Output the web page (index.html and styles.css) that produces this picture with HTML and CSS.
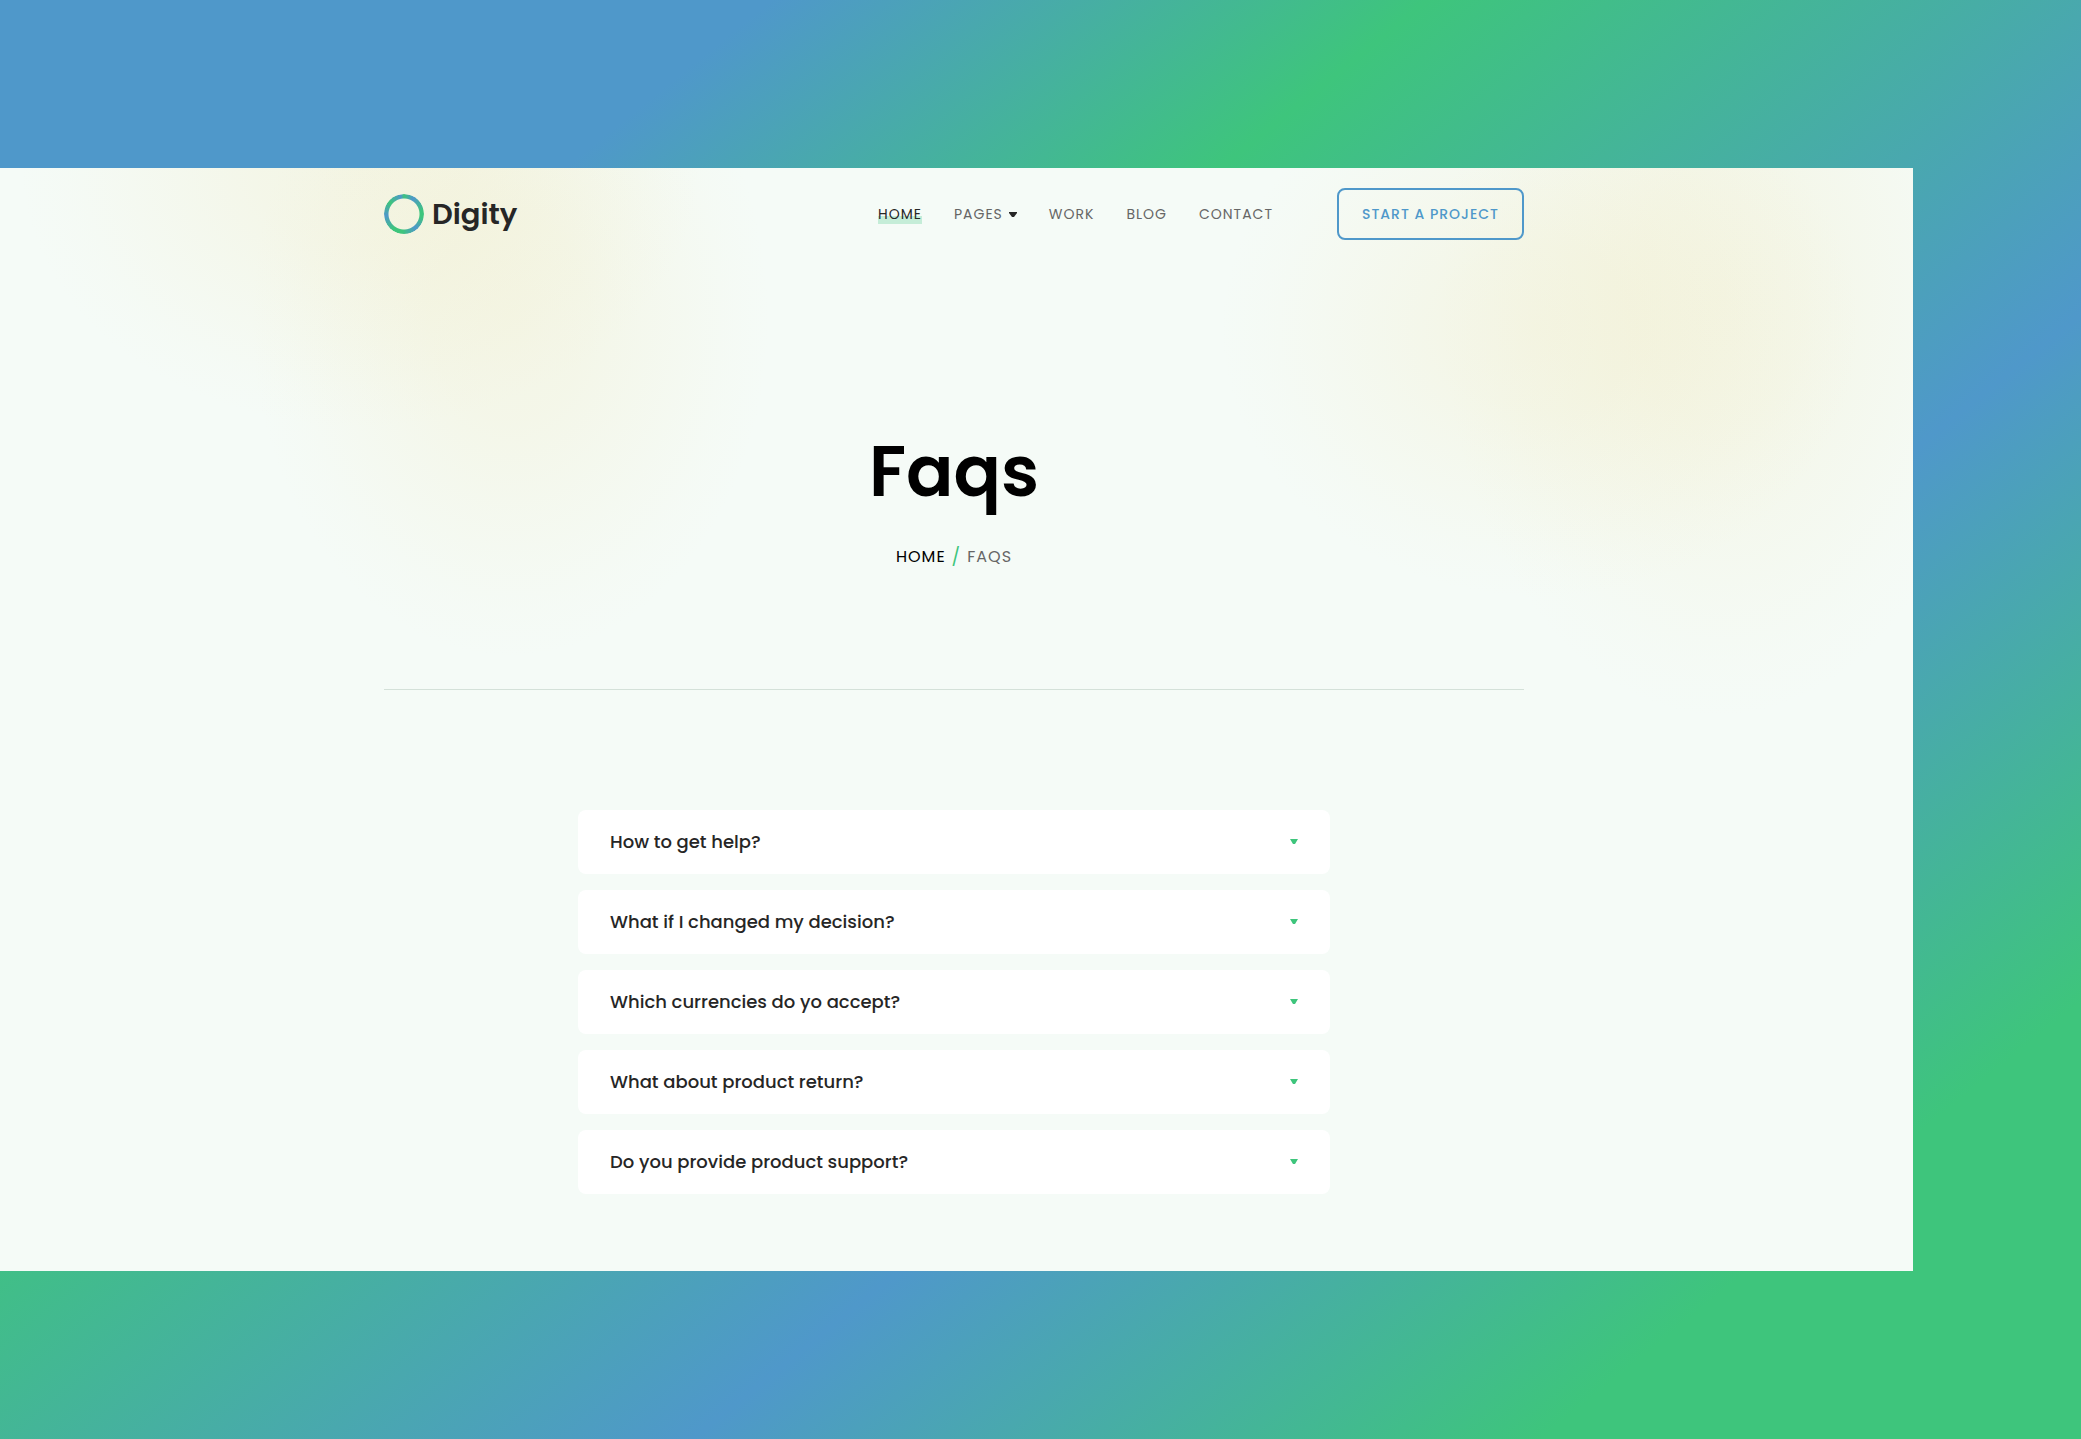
FILE: index.html
```
<!DOCTYPE html>
<html lang="en">
<head>
<meta charset="utf-8">
<title>Faqs – Digity</title>
<link rel="stylesheet" href="styles.css">
</head>
<body>
<div class="page">
  <header class="header container">
    <a class="brand" href="#">
      <span class="brand-mark"></span>
      <span>Digity</span>
    </a>
    <nav class="nav" aria-label="Main">
      <a class="nav-link active" href="#">HOME</a>
      <a class="nav-link" href="#">PAGES <svg class="caret" viewBox="0 0 8 5" aria-hidden="true"><path d="M0 0h8v1L5 5H3L0 1z"/></svg></a>
      <a class="nav-link" href="#">WORK</a>
      <a class="nav-link" href="#">BLOG</a>
      <a class="nav-link" href="#">CONTACT</a>
    </nav>
    <a class="cta" href="#">START A PROJECT</a>
  </header>
  <main>
    <section class="hero container">
      <h1>Faqs</h1>
      <nav class="crumbs" aria-label="Breadcrumb">
        <a href="#">HOME</a><span class="slash">/</span><span>FAQS</span>
      </nav>
    </section>
    <section class="faq">
      <button class="faq-item" type="button"><span>How to get help?</span><svg class="caret" viewBox="0 0 8 5" aria-hidden="true"><path d="M0 0h8L5 5H3z"/></svg></button>
      <button class="faq-item" type="button"><span>What if I changed my decision?</span><svg class="caret" viewBox="0 0 8 5" aria-hidden="true"><path d="M0 0h8L5 5H3z"/></svg></button>
      <button class="faq-item" type="button"><span>Which currencies do yo accept?</span><svg class="caret" viewBox="0 0 8 5" aria-hidden="true"><path d="M0 0h8L5 5H3z"/></svg></button>
      <button class="faq-item" type="button"><span>What about product return?</span><svg class="caret" viewBox="0 0 8 5" aria-hidden="true"><path d="M0 0h8L5 5H3z"/></svg></button>
      <button class="faq-item" type="button"><span>Do you provide product support?</span><svg class="caret" viewBox="0 0 8 5" aria-hidden="true"><path d="M0 0h8L5 5H3z"/></svg></button>
    </section>
  </main>
</div>
</body>
</html>
```
FILE: styles.css
```
* { box-sizing: border-box; }

body {
  margin: 0;
  min-height: 100vh;
  padding: 168px 168px 168px 0;
  font-family: Poppins, Lato, "Open Sans", sans-serif;
  color: #262626;
  background: linear-gradient(141deg, #4f98ca 20%, #3ec57c 37%, #4f98ca 64%, #3ec57c 86%);
}

a { color: inherit; text-decoration: none; }

.page {
  --glow: rgba(240, 228, 175, 0.24), rgba(240, 228, 175, 0.2) 30%, rgba(240, 228, 175, 0.12) 55%, rgba(240, 228, 175, 0.03) 85%, rgba(240, 228, 175, 0);
  padding: 0 5px 77px 0;
  background:
    radial-gradient(ellipse 260px 340px at 510px 150px, var(--glow)),
    radial-gradient(ellipse 340px 260px at 360px 0, var(--glow)),
    radial-gradient(ellipse 320px 270px at 1540px 160px, var(--glow)),
    radial-gradient(ellipse 280px 420px at 1720px 130px, var(--glow)),
    #f5fbf7;
}

.container { width: 1140px; max-width: 100%; margin: 0 auto; }

.header { display: flex; align-items: center; height: 92px; }

.brand {
  display: flex;
  align-items: center;
  gap: 8px;
  margin-right: auto;
  font-size: 29px;
  line-height: 40px;
  font-weight: 600;
}

/* Ring: conic gradient with the middle masked out */
.brand-mark {
  width: 40px;
  height: 40px;
  border-radius: 50%;
  background: conic-gradient(#3ec57c, #4f98ca 30deg, #3ec57c 80deg, #3ec57c 100deg, #4f98ca 140deg, #3ec57c 185deg, #3ec57c 215deg, #4f98ca 265deg, #3ec57c 310deg, #4f98ca 350deg, #3ec57c);
  mask: radial-gradient(circle, transparent 15px, #000 16px);
}

.nav { display: flex; gap: 32px; margin-right: 64px; font-size: 14px; letter-spacing: 1px; color: #666; }
.nav-link { display: flex; align-items: center; gap: 6px; line-height: 20px; }
.nav-link.active { color: #262626; background: linear-gradient(transparent 60%, #c5edd8 60%); }

.caret { width: 8px; height: 5px; fill: #262626; }

.cta {
  padding: 14px 23px;
  border: 2px solid #4f98ca;
  border-radius: 8px;
  font-size: 14px;
  font-weight: 500;
  line-height: 20px;
  letter-spacing: 1px;
  color: #4f98ca;
}

.hero { padding: 164px 0 116px; border-bottom: 1px solid #d4e1d9; text-align: center; }

h1 { margin: 0; font-size: 70px; line-height: 96px; font-weight: 600; color: #000; }

.crumbs { display: flex; align-items: center; justify-content: center; gap: 6px; margin-top: 21px; font-size: 16px; line-height: 32px; letter-spacing: 1px; color: #666; }
.crumbs a { color: #000; }
.slash { font-size: 18px; color: #3ec57c; }

.faq { display: grid; gap: 16px; width: 752px; max-width: 100%; margin: 120px auto 0; }

.faq-item {
  display: flex;
  align-items: center;
  justify-content: space-between;
  height: 64px;
  padding: 0 32px 2px;
  border: 0;
  border-radius: 8px;
  background: #fff;
  color: #262626;
  font: inherit;
  font-size: 18px;
  font-weight: 500;
}
.faq-item .caret { fill: #3ec57c; }
```
